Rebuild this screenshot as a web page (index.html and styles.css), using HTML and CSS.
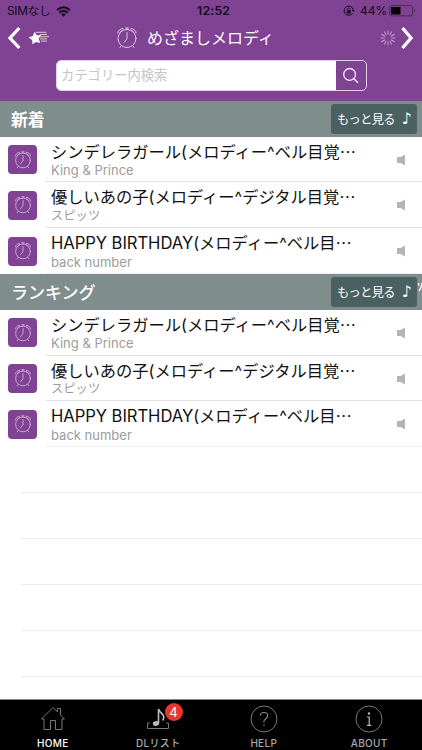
FILE: index.html
```
<!DOCTYPE html>
<html lang="ja">
<head>
<meta charset="utf-8">
<title>めざましメロディ</title>
<link rel="stylesheet" href="styles.css">
</head>
<body>
<svg class="defs" width="0" height="0">
  <symbol id="clock" viewBox="0 0 22 24">
    <g fill="none" stroke="currentColor" stroke-width="1" stroke-linecap="round">
      <circle cx="11" cy="12.500" r="9"/>
      <path d="M11 6.500v6.500l-3 3.500M1.800 7C2 4.500 4.500 2.500 7 2.500M20.200 7C20 4.500 17.500 2.500 15 2.500M11 3.500V2M9.500 2h3M5 20l-1 1.500M17 20l1 1.500"/>
    </g>
    <path d="M3.800 6.600Q5 4.700 7.200 3.900M18.200 6.600Q17 4.700 14.800 3.900" fill="none" stroke="currentColor" stroke-width=".8"/>
  </symbol>
  <symbol id="speaker" viewBox="0 0 10 12"><path fill="#b5b5b5" d="M1 3h3.500L9 .5v11L4.500 9H1z"/></symbol>
</svg>
<div class="app">
  <header class="header">
    <div class="status">
      <span class="carrier">SIMなし</span>
      <svg class="wifi" width="15" height="11" viewBox="0 0 15 11"><g fill="none" stroke="#130b1b" stroke-width="2"><path d="M1 4.200Q7.500-1.800 14 4.200M3.300 6.700Q7.500 2.700 11.700 6.700"/></g><path fill="#130b1b" d="M5.200 8.200Q7.500 6.200 9.800 8.200L7.500 10.800z"/></svg>
      <span class="time">12:52</span>
      <svg class="lock" width="12" height="12" viewBox="0 0 12 12"><path d="M9.600 8.200A4.600 4.600 0 1 1 10.300 5" fill="none" stroke="#130b1b" stroke-width="1"/><path d="M8.700 5h3.100l-1.500 2z" fill="#130b1b"/><path d="M3.700 5.400h4v3h-4z" fill="#130b1b"/><path d="M4.500 5.500V4.300a1.200 1.200 0 0 1 2.400 0v1.200" fill="none" stroke="#130b1b" stroke-width=".8"/></svg>
      <span class="percent">44%</span>
      <svg class="battery" width="27" height="12" viewBox="0 0 27 12"><rect x=".6" y=".6" width="23" height="10.300" rx="2" fill="none" stroke="#4c2958"/><path fill="#000" d="M2 2h9.500v7.500H2z"/><path d="M25 4.200q2 1.600 0 3.200z" fill="#4c2958"/></svg>
    </div>
    <div class="nav">
      <svg class="back" width="15" height="24" viewBox="0 0 15 24"><path d="M12.300 2L3 12l9.300 10" fill="none" stroke="#fff" stroke-width="3.300"/></svg>
      <svg class="star" width="22" height="14" viewBox="0 0 22 14"><path d="M6.500 1l2.300 3.200 4.200-.2-2.300 3.600 1.400 4.500-4.100-1.200-3.600 2.400-.2-4.200L.5 6.600l4.300-1.500z" fill="#fff"/><path d="M7.500 1.300h11M12 3.500h7M12 5.700h9M12 7.900h7M13 10.100h6" stroke="#dac7df" fill="none"/></svg>
      <svg class="title-icon"><use href="#clock"/></svg>
      <h1 class="title">めざましメロディ</h1>
      <svg class="spinner" width="16" height="16" viewBox="-8 -8 16 16"><g stroke="#c8a9d0" stroke-width=".9"><path id="ray" d="M0-3.500V-7.500M0 3.500V7.500M-3.500 0H-7.500M3.500 0H7.500"/><use href="#ray" transform="rotate(30)"/><use href="#ray" transform="rotate(60)"/></g></svg>
      <svg class="forward" width="15" height="24" viewBox="0 0 15 24"><path d="M2.500 2L11 12l-8.500 10" fill="none" stroke="#fff" stroke-width="3.300"/></svg>
    </div>
    <div class="search">
      <span class="placeholder">カテゴリー内検索</span>
      <span class="search-button"><svg width="18" height="18" viewBox="0 0 18 18"><circle cx="7.600" cy="7.400" r="5.900" fill="none" stroke="#f2e9f5" stroke-width="1.300"/><path d="M11.900 11.700L16 15.700" stroke="#f2e9f5" stroke-width="1.500"/></svg></span>
    </div>
  </header>
  <main class="list">
    <section>
      <div class="section-head"><h2 class="new">新着</h2><span class="more"><span>もっと見る</span><i>♪</i></span></div>
      <div class="row"><span class="tile"><svg><use href="#clock"/></svg></span><div class="song"><div class="name">シンデレラガール(メロディー^ベル目覚⋯</div><div class="artist">King &amp; Prince</div><svg class="speaker"><use href="#speaker"/></svg></div></div>
      <div class="row"><span class="tile"><svg><use href="#clock"/></svg></span><div class="song"><div class="name">優しいあの子(メロディー^デジタル目覚⋯</div><div class="artist ja">スピッツ</div><svg class="speaker"><use href="#speaker"/></svg></div></div>
      <div class="row"><span class="tile"><svg><use href="#clock"/></svg></span><div class="song"><div class="name"><span class="latin">HAPPY BIRTHDAY</span>(メロディー^ベル目⋯</div><div class="artist">back number</div><svg class="speaker"><use href="#speaker"/></svg></div></div>
    </section>
    <section>
      <div class="section-head"><h2 class="ranking">ランキング</h2><span class="more"><span>もっと見る</span><i>♪</i></span><svg class="scrap" width="4" height="9" viewBox="0 0 4 9"><path d="M.7 0v2.500M4 0Q3.500 5 1 8" fill="none" stroke="#fff" stroke-width="1.300"/></svg></div>
      <div class="row"><span class="tile"><svg><use href="#clock"/></svg></span><div class="song"><div class="name">シンデレラガール(メロディー^ベル目覚⋯</div><div class="artist">King &amp; Prince</div><svg class="speaker"><use href="#speaker"/></svg></div></div>
      <div class="row"><span class="tile"><svg><use href="#clock"/></svg></span><div class="song"><div class="name">優しいあの子(メロディー^デジタル目覚⋯</div><div class="artist ja">スピッツ</div><svg class="speaker"><use href="#speaker"/></svg></div></div>
      <div class="row"><span class="tile"><svg><use href="#clock"/></svg></span><div class="song"><div class="name"><span class="latin">HAPPY BIRTHDAY</span>(メロディー^ベル目⋯</div><div class="artist">back number</div><svg class="speaker"><use href="#speaker"/></svg></div></div>
    </section>
    <div class="empty"></div><div class="empty"></div><div class="empty"></div><div class="empty"></div><div class="empty"></div>
  </main>
  <footer class="tabs">
    <div class="tab active"><svg width="28" height="28" viewBox="0 0 28 28"><path d="M2.500 14L14 2.500 18.500 7V3.500h3V10l4 4H23v10.500h-6.500V15.500h-5v9H5V14z" fill="none" stroke="#777"/></svg><span>HOME</span></div>
    <div class="tab"><svg width="28" height="28" viewBox="0 0 28 28"><path d="M6 18H3.500v5.500h21V18H22" fill="none" stroke="#777"/><ellipse cx="12" cy="18.500" rx="3.200" ry="2.300" transform="rotate(-20 12 18.500)" fill="#bbb"/><path d="M14.500 18V4q1 3 4.200 5.500 2.200 2.500 0 6" fill="none" stroke="#bbb" stroke-width="1.600"/></svg><b class="badge">4</b><span>DLリスト</span></div>
    <div class="tab"><svg width="28" height="28" viewBox="0 0 28 28"><circle cx="14" cy="14" r="13" fill="none" stroke="#777"/><path d="M10.300 10.500Q10.300 7.500 14 7.500T17.700 10.500Q17.700 12.500 15.500 14T14 17.500M14 19.500V21" fill="none" stroke="#888" stroke-width="1.100"/></svg><span>HELP</span></div>
    <div class="tab"><svg width="28" height="28" viewBox="0 0 28 28"><circle cx="14" cy="14" r="13" fill="none" stroke="#777"/><circle cx="14" cy="8.500" r="1.200" fill="#bbb"/><path d="M12 12h2.200v8M12 20.300h4.300" fill="none" stroke="#bbb" stroke-width="1.200"/></svg><span>ABOUT</span></div>
  </footer>
</div>
</body>
</html>
```
FILE: styles.css
```
* { box-sizing: border-box; }
body { margin: 0; font-family: Inter, "Noto Sans CJK JP", sans-serif; }
svg { display: block; flex-shrink: 0; }
.defs { position: absolute; }
.app { width: 422px; height: 750px; overflow: hidden; display: flex; flex-direction: column; background: #fff; }
h1, h2 { margin: 0; font-weight: 400; white-space: nowrap; }
.header { height: 101px; background: #804394; flex-shrink: 0; }
.status { display: flex; align-items: center; height: 22px; font-size: 12.3px; line-height: 22px; color: #130b1b; white-space: nowrap; }
.carrier { width: 49px; margin-left: 7px; font-size: 11.8px; letter-spacing: -.3px; }
.time { width: 45px; margin-left: 126px; font-weight: 600; letter-spacing: .2px; }
.lock { margin-left: 101px; }
.percent { width: 27px; margin-left: 5px; font-size: 12px; }
.battery { margin-left: 2px; }
.nav { display: flex; align-items: center; height: 32px; color: #dac7df; }
.back { margin-left: 7px; }
.star { margin-left: 6px; }
.title-icon { width: 22px; height: 24px; margin-left: 66px; }
.title { width: 130px; margin-left: 9px; font-size: 16px; color: #fff; line-height: 32px; }
.spinner { margin-left: 103px; }
.forward { margin-left: 4px; }
.search { display: flex; width: 311px; height: 31px; margin: 6px 0 0 56px; border: 1px solid #e2d2e7; border-radius: 5px; overflow: hidden; }
.placeholder { flex: 1; padding-left: 4px; background: #fff; color: #c4c4c9; font-size: 13.3px; line-height: 28px; }
.search-button { width: 30px; display: flex; align-items: center; justify-content: center; }
.list { flex: 1; }
.section-head { position: relative; display: flex; align-items: center; justify-content: space-between; height: 35.700px; padding: 0 5px 0 11px; background: #7f8d8d; color: #fff; }
.section-head h2 { padding-top: 3px; font-size: 17px; line-height: 33px; font-weight: 500; }
.section-head .new { font-size: 16.800px; font-weight: 700; }
.more { display: flex; justify-content: space-between; align-items: center; width: 86px; height: 30px; padding: 0 6px; border-radius: 3px; background: #4a6061; font-size: 12.2px; line-height: 28px; white-space: nowrap; letter-spacing: -.6px; }
.more span { padding-top: 2px; }
.more i { font: 16px/28px "DejaVu Sans", sans-serif; }
.scrap { position: absolute; right: 0; top: 9px; }
.row { display: flex; align-items: center; height: 45.800px; padding-left: 8px; }
.tile { display: flex; align-items: center; justify-content: center; width: 29px; height: 29px; border-radius: 4px; background: #804394; color: #d5b8df; }
.tile svg { width: 18px; height: 20px; }
.song { position: relative; flex: 1; height: 100%; margin-left: 8px; padding: 5px 0 0 6px; border-bottom: 1px solid #e3e3e3; }
.row:last-child .song { border-bottom-color: #f0f0f0; }
.name { font-size: 16.250px; line-height: 21.500px; color: #111; white-space: nowrap; }
.latin { font-size: 16.600px; letter-spacing: -.05px; }
.artist { font-size: 13px; line-height: 14px; color: #9c9c9c; white-space: nowrap; }
.ja { font-size: 12.300px; }
.speaker { position: absolute; left: 351px; top: 17px; width: 10px; height: 12px; }
.empty { height: 45.900px; margin-left: 21px; border-bottom: 1px solid #ececec; }
.tabs { display: flex; height: 51px; background: #000; border-top: 1px solid #888; flex-shrink: 0; }
.tab { position: relative; flex: 1; display: flex; flex-direction: column; align-items: center; padding-top: 5px; color: #aaa; }
.tab span { font-size: 10px; line-height: 12px; margin-top: 4px; letter-spacing: .3px; font-weight: 500; white-space: nowrap; }
.active span { color: #fff; }
.badge { position: absolute; left: 59px; top: 3px; width: 18px; height: 18px; border-radius: 50%; background: #e8362e; color: #fff; font-size: 13px; line-height: 18px; font-weight: 400; text-align: center; }
```
